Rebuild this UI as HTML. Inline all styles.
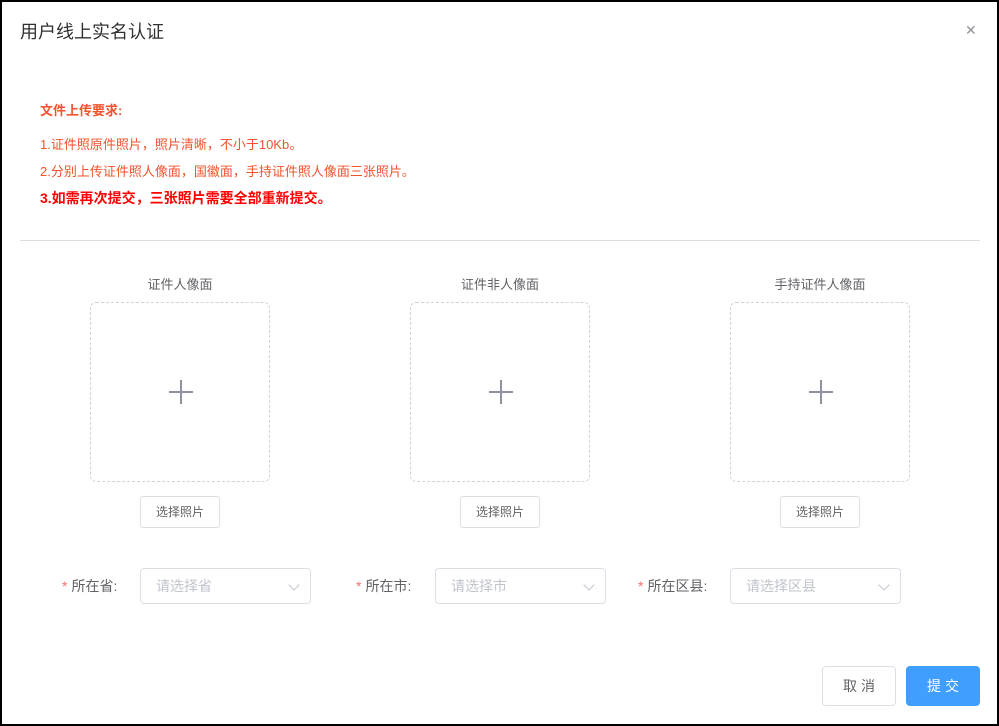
<!DOCTYPE html>
<html><head><meta charset="utf-8"><style>
*{box-sizing:border-box;margin:0;padding:0}
body{width:999px;height:726px;background:#fff;font-family:"Liberation Sans","Noto Sans CJK SC",sans-serif;position:relative;overflow:hidden}
.frame{position:absolute;left:0;top:0;width:999px;height:726px;border:2px solid #000}
.a{position:absolute}
.title{left:20px;top:20px;font-size:18px;color:#303133;line-height:24px}
.close{left:965px;top:22px;font-size:14px;color:#909399}
.req{left:40px;font-size:13px;color:#f5522d;line-height:18px}
.hr{left:20px;top:240px;width:960px;height:1px;background:#dcdfe6}
.lbl{font-size:13px;color:#606266;width:180px;text-align:center;top:274px}
.box{top:302px;width:180px;height:180px;border:1px dashed #d0d3d9;border-radius:6px}
.box:before{content:"";position:absolute;left:78px;top:88px;width:24px;height:1.5px;background:#8c939d}
.box:after{content:"";position:absolute;left:89px;top:77px;width:1.5px;height:24px;background:#8c939d}
.btn{top:496px;width:80px;height:32px;border:1px solid #dcdfe6;border-radius:3px;font-size:12px;color:#606266;text-align:center;line-height:30px}
.fl{top:577px;font-size:14px;color:#606266;line-height:18px}
.fl b{color:#f56c6c;font-weight:normal;margin-right:4px}
.sel{top:568px;width:171px;height:36px;border:1px solid #dcdfe6;border-radius:4px;font-size:14px;color:#c0c4cc;line-height:34px;padding-left:15px}
.sel i{position:absolute;right:12px;top:12px;width:8px;height:8px;border-right:1px solid #c0c4cc;border-bottom:1px solid #c0c4cc;transform:rotate(45deg)}
.fb{top:666px;width:74px;height:40px;border-radius:4px;font-size:14px;text-align:center;line-height:38px;letter-spacing:4px;text-indent:4px}
</style></head><body>
<div class="a title">用户线上实名认证</div>
<div class="a close">✕</div>
<div class="a req" style="top:102px;font-weight:bold">文件上传要求:</div>
<div class="a req" style="top:136px">1.证件照原件照片，照片清晰，不小于10Kb。</div>
<div class="a req" style="top:163px">2.分别上传证件照人像面，国徽面，手持证件照人像面三张照片。</div>
<div class="a req" style="top:189px;font-weight:bold;color:#ff0000;font-size:14px">3.如需再次提交，三张照片需要全部重新提交。</div>
<div class="a hr"></div>
<div class="a lbl" style="left:90px">证件人像面</div>
<div class="a lbl" style="left:410px">证件非人像面</div>
<div class="a lbl" style="left:730px">手持证件人像面</div>
<div class="a box" style="left:90px"></div>
<div class="a box" style="left:410px"></div>
<div class="a box" style="left:730px"></div>
<div class="a btn" style="left:140px">选择照片</div>
<div class="a btn" style="left:460px">选择照片</div>
<div class="a btn" style="left:780px">选择照片</div>
<div class="a fl" style="left:62px"><b>*</b>所在省:</div>
<div class="a sel" style="left:140px">请选择省<i></i></div>
<div class="a fl" style="left:356px"><b>*</b>所在市:</div>
<div class="a sel" style="left:435px">请选择市<i></i></div>
<div class="a fl" style="left:638px"><b>*</b>所在区县:</div>
<div class="a sel" style="left:730px">请选择区县<i></i></div>
<div class="a fb" style="left:822px;border:1px solid #dcdfe6;color:#606266">取消</div>
<div class="a fb" style="left:906px;background:#409eff;color:#fff;border:1px solid #409eff">提交</div>
<div class="frame"></div>
</body></html>
